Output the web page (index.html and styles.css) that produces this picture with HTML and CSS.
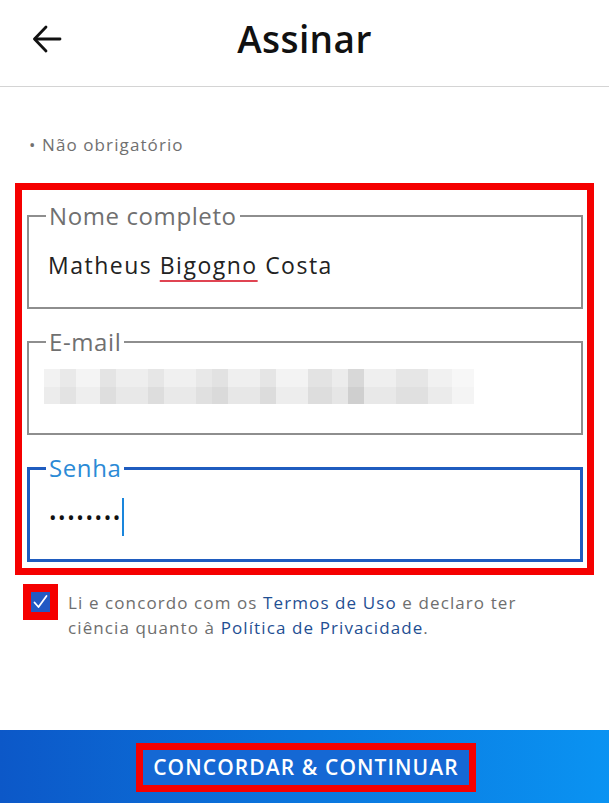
FILE: index.html
```html
<!DOCTYPE html>
<html lang="pt-BR">

<head>
    <meta charset="UTF-8">
    <meta name="viewport" content="width=device-width, initial-scale=1.0">
    <title>Assinar</title>
    <link rel="stylesheet" href="styles.css">
</head>

<body>
    <header class="topbar">
        <button class="back-button" aria-label="Voltar">
            <svg width="30" height="28" viewBox="0 0 30 28" fill="none" stroke="#111" stroke-width="2.8"
                stroke-linecap="round" stroke-linejoin="round">
                <path d="M28 14H3" />
                <path d="M14 2L2.5 14L14 26" />
            </svg>
        </button>
        <h1 class="title">Assinar</h1>
        <span></span>
    </header>

    <main class="content">
        <p class="note">• Não obrigatório</p>

        <div class="highlight form-box">
            <fieldset class="field">
                <legend class="field-label">Nome completo</legend>
                <div class="field-value"><span class="typo">Matheus <u>Bigogno</u> Costa</span></div>
            </fieldset>

            <fieldset class="field">
                <legend class="field-label">E-mail</legend>
                <div class="blurred"></div>
            </fieldset>

            <fieldset class="field focused">
                <legend class="field-label">Senha</legend>
                <div class="field-value"><span class="dots">••••••••</span><span class="caret"></span></div>
            </fieldset>
        </div>

        <div class="terms">
            <span class="highlight check-wrap">
                <span class="checkbox">
                    <svg width="19" height="20" viewBox="0 0 19 20" fill="none" stroke="#fff" stroke-width="1.8"
                        stroke-linecap="round" stroke-linejoin="round">
                        <path d="M3.5 10.5L7.5 15L15.5 4" />
                    </svg>
                </span>
            </span>
            <p class="terms-text">Li e concordo com os <a href="#">Termos de Uso</a> e declaro ter<br>ciência quanto
                à <a href="#">Política de Privacidade</a>.</p>
        </div>
    </main>

    <footer class="bottom-bar">
        <button class="continue-button"><span class="highlight">CONCORDAR &amp; CONTINUAR</span></button>
    </footer>
</body>

</html>
```

FILE: styles.css
```css
body {
    margin: 0;
    height: 812px;
    display: flex;
    flex-direction: column;
    background-color: #fff;
    font-family: 'Open Sans', 'Liberation Sans', sans-serif;
    color: #222;
}

.topbar {
    box-sizing: border-box;
    height: 87px;
    padding-bottom: 9px;
    border-bottom: 1px solid #d4d4d4;
    display: grid;
    grid-template-columns: 1fr auto 1fr;
    align-items: center;
}

.back-button {
    justify-self: start;
    margin-left: 32px;
    padding: 0;
    border: none;
    background: none;
    display: flex;
}

.title {
    margin: 0;
    font-size: 37px;
    font-weight: 600;
    color: #111;
    letter-spacing: 0.4px;
}

.content {
    flex: 1;
    padding: 0 15px 0 15px;
}

.note {
    margin: 48px 0 28px 14px;
    font-size: 17px;
    line-height: 20px;
    letter-spacing: 1.1px;
    color: #707070;
}

.highlight {
    border: 7px solid #f50000;
}

.form-box {
    padding: 12px 4px 6px 5px;
    display: flex;
    flex-direction: column;
    gap: 19px;
}

.field {
    margin: 0;
    padding: 0 16px 0 17px;
    border: 2px solid #8e8e8e;
    min-width: 0;
}

.field-label {
    padding: 0 3px;
    font-size: 24px;
    line-height: 28px;
    letter-spacing: 0.6px;
    color: #707070;
}

.field-value {
    display: flex;
    align-items: center;
    height: 30px;
    padding: 20px 0 27px 2px;
    font-size: 23px;
    letter-spacing: 1.5px;
    color: #222;
}

.typo u {
    text-decoration: underline solid #e04452;
    text-decoration-thickness: 2px;
    text-underline-offset: 6px;
}

.blurred {
    height: 35px;
    width: 430px;
    margin: 13px 0 29px -2px;
    background:
        linear-gradient(90deg, #f2f2f2 0 16px, #e9e9e9 16px 32px, #f4f4f4 32px 56px, #e4e4e4 56px 72px, #eeeeee 72px 104px, #e6e6e6 104px 120px, #f0f0f0 120px 152px, #e8e8e8 152px 168px, #e2e2e2 168px 184px, #efefef 184px 216px, #e5e5e5 216px 232px, #f3f3f3 232px 264px, #e3e3e3 264px 288px, #ececec 288px 304px, #d8d8d8 304px 320px, #efefef 320px 352px, #e6e6e6 352px 384px, #f1f1f1 384px 408px, #f7f7f7 408px 430px) top / 430px 18px no-repeat,
        linear-gradient(90deg, #ececec 0 16px, #e3e3e3 16px 32px, #eeeeee 32px 56px, #dedede 56px 72px, #e8e8e8 72px 104px, #dddddd 104px 120px, #e9e9e9 120px 152px, #e0e0e0 152px 168px, #dadada 168px 184px, #e7e7e7 184px 216px, #dcdcdc 216px 232px, #ededed 232px 264px, #dddddd 264px 288px, #e6e6e6 288px 304px, #cfcfcf 304px 320px, #e8e8e8 320px 352px, #e0e0e0 352px 384px, #ebebeb 384px 408px, #f4f4f4 408px 430px) bottom / 430px 17px no-repeat;
}

.focused {
    border: 3px solid #1f5cbf;
}

.focused .field-label {
    color: #2b8ad6;
    margin-left: -1px;
}

.dots {
    font-size: 20px;
    letter-spacing: 1.6px;
    color: #111;
}

.caret {
    width: 2px;
    height: 38px;
    margin-left: 0;
    background-color: #1a86dc;
}

.terms {
    display: flex;
    align-items: flex-start;
    margin: 9px 0 0 8px;
}

.check-wrap {
    display: flex;
    padding: 1px 1px;
    background-color: #f50000;
}

.checkbox {
    display: flex;
    width: 19px;
    height: 20px;
    background-color: #2259c4;
}

.terms-text {
    margin: 6px 0 0 10px;
    font-size: 17px;
    line-height: 25px;
    letter-spacing: 1.1px;
    color: #6e6e6e;
}

.terms-text a {
    color: #1f4f93;
    text-decoration: none;
}

.bottom-bar {
    height: 73px;
    margin-bottom: 9px;
    display: flex;
    align-items: center;
    justify-content: center;
    background: linear-gradient(90deg, #0c58c8, #0a93f2);
}

.continue-button {
    padding: 0;
    border: none;
    background: none;
    font-family: inherit;
    margin: 2px 0 0 3px;
}

.continue-button .highlight {
    display: block;
    padding: 5px 10px 6px;
    background-color: #1568d4;
    color: #fff;
    font-size: 21px;
    font-weight: 600;
    line-height: 24px;
    letter-spacing: 1.1px;
}
```
